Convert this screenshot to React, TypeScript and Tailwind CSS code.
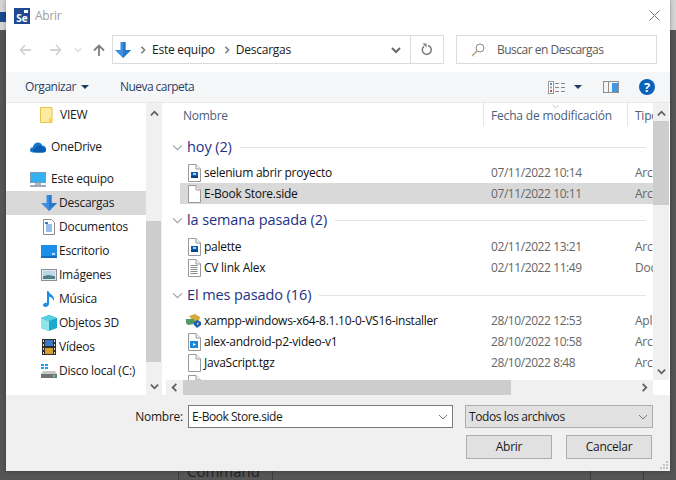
import React from "react";

const FileBase = ({ children }: { children?: React.ReactNode }) => (
  <svg width="16" height="18" viewBox="0 0 16 18" className="shrink-0">
    <path d="M2.5 .5h7.5l4.5 4.5v12.5h-12z" fill="#fff" stroke="#9a9a9a" />
    <path d="M10 .5v4.5h4.5" fill="#f4f4f4" stroke="#9a9a9a" />
    {children}
  </svg>
);

const ImgFile = () => (
  <FileBase>
    <rect x="5" y="8" width="7" height="6" fill="#0f5fb0" />
    <rect x="7" y="9" width="3" height="2" fill="#9fd0f5" />
    <rect x="5" y="12" width="7" height="2" fill="#0a3f80" />
  </FileBase>
);

const VideoFile = () => (
  <FileBase>
    <rect x="4" y="8" width="8" height="7" fill="#1a86d8" />
    <path d="M7 10l3 1.5-3 1.5z" fill="#fff" />
  </FileBase>
);

const TextFile = () => (
  <FileBase>
    <path d="M4.500 6.500h7M4.500 8.500h7M4.500 10.500h7M4.500 12.500h7M4.500 14.500h7" stroke="#8a8a8a" />
  </FileBase>
);

const Xampp = () => (
  <svg width="18" height="16" viewBox="0 0 18 16" className="shrink-0">
    <path d="M4 3l6-2 5 3-1 4-5 1z" fill="#d8a93c" />
    <path d="M1 6h8l1 5-7 1-2-2z" fill="#4f9a66" />
    <path d="M12 7l4 2v3l-4 3-3-3v-3z" fill="#1f5fb0" />
    <path d="M12 9l2 1.500-2 2z" fill="#f0c33c" />
  </svg>
);

const DownArrow = ({ w = 16 }: { w?: number }) => (
  <svg width={w} height={w} viewBox="0 0 16 16" className="shrink-0">
    <path d="M5.500 0h5v8H16l-8 8-8-8h5.500z" fill="#3a8fe0" />
    <path d="M8 0h2.500v8H16l-8 8z" fill="#2a78c8" />
  </svg>
);

const FolderY = () => (
  <svg width="13" height="16" viewBox="0 0 13 16" className="shrink-0">
    <path d="M.5 .5h11.500v15H.5z" fill="#fdeb9f" stroke="#e6c24e" />
    <path d="M9 11h3.500v4.500H9z" fill="#f6d463" />
  </svg>
);

const OneDrive = () => (
  <svg width="16" height="11" viewBox="0 0 16 11" className="shrink-0">
    <path d="M3 10.500C1 10.500 0 9.300 0 8c0-1.500 1.200-2.600 2.800-2.700C3.500 2.200 5.500 .5 8 .5c2 0 3.500 1 4.300 3 2 0 3.700 1.500 3.700 3.500s-1.500 3.500-3.500 3.500z" fill="#1278d0" />
    <path d="M6 10.500c-2 0-3-1-3-2.300 0-1.400 1-2.300 2.500-2.400.8-1.500 2-2.300 3.700-2.300 1.500 0 2.700.7 3.300 2 1.900 0 3.500 1.300 3.500 3 0 1-1 2-2.500 2z" fill="#0a5cb0" />
  </svg>
);

const Monitor = () => (
  <svg width="16" height="15" viewBox="0 0 16 15" className="shrink-0">
    <rect x=".5" y=".5" width="15" height="10" fill="#35b0ee" stroke="#7d9cb8" />
    <rect x="5" y="11" width="6" height="2" fill="#a8b8c8" />
    <rect x="0" y="13" width="16" height="2" fill="#9aaabb" />
  </svg>
);

const Docs = () => (
  <svg width="12" height="16" viewBox="0 0 12 16" className="shrink-0">
    <path d="M.5 .5h8l3 3v12H.5z" fill="#fff" stroke="#8c8c8c" />
    <path d="M3 6h6M3 8h6M3 10h6M3 12h6" stroke="#2b7fd0" />
    <rect x="2" y="3" width="3" height="2" fill="#2b7fd0" />
  </svg>
);

const Desktop = () => (
  <svg width="16" height="13" viewBox="0 0 16 13" className="shrink-0">
    <rect width="16" height="13" fill="#1b8fe8" />
    <rect y="11" width="16" height="2" fill="#0f6cc0" />
    <rect x="11" y="8" width="3" height="2" fill="#bfe2fb" />
  </svg>
);

const Pictures = () => (
  <svg width="16" height="12" viewBox="0 0 16 12" className="shrink-0">
    <rect x=".5" y=".5" width="15" height="11" fill="#dfeaf0" stroke="#8f8f8f" />
    <rect x="2" y="2" width="12" height="4" fill="#bcd6e6" />
    <path d="M2 7l5-1 7 1v3H2z" fill="#4f7f86" />
  </svg>
);

const Music = () => (
  <svg width="12" height="16" viewBox="0 0 12 16" className="shrink-0">
    <path d="M4 0h1.500c.5 3 5.500 4 5.500 8 0 1-.3 1.500-.8 2 .2-2.500-2-3.800-4.200-4.500V13c0 2-2 3-3.700 3C1 16 0 15.200 0 14c0-1.500 1.700-2.600 4-2.300z" fill="#1b8fe8" />
  </svg>
);

const Cube = () => (
  <svg width="16" height="16" viewBox="0 0 16 16" className="shrink-0">
    <path d="M8 0l8 3v10l-8 3-8-3V3z" fill="#1aa8cc" />
    <path d="M0 3l8 3v10l-8-3z" fill="#8fe6ea" />
    <path d="M0 3l8-3 8 3-8 3z" fill="#55cfe0" />
  </svg>
);

const Film = () => (
  <svg width="14" height="16" viewBox="0 0 14 16" className="shrink-0">
    <rect width="14" height="16" fill="#2e2e2e" />
    <rect x="3" y="1" width="8" height="6" fill="#3a78c8" />
    <rect x="3" y="9" width="8" height="6" fill="#d8a030" />
    <path d="M1 1h1v2H1zM1 5h1v2H1zM1 9h1v2H1zM1 13h1v2H1zM12 1h1v2h-1zM12 5h1v2h-1zM12 9h1v2h-1zM12 13h1v2h-1z" fill="#ddd" />
  </svg>
);

const Drive = () => (
  <svg width="16" height="14" viewBox="0 0 16 14" className="shrink-0">
    <rect x="0" y="0" width="3" height="2" fill="#1fa0ee" />
    <rect x="4" y="0" width="3" height="2" fill="#1fa0ee" />
    <rect x="0" y="3" width="3" height="2" fill="#1fa0ee" />
    <rect x="4" y="3" width="3" height="2" fill="#1fa0ee" />
    <path d="M2 7h12l2 3v4H0v-4z" fill="#c6c6c6" />
    <rect y="10" width="16" height="4" fill="#6f7476" />
    <rect x="12" y="11" width="2" height="2" fill="#55e060" />
  </svg>
);

const Chevron = ({ dir, color = "#606060", size = 10, sw = 2 }: { dir: "up" | "down" | "left" | "right"; color?: string; size?: number; sw?: number }) => {
  const d = {
    up: "M1 7l4-4 4 4",
    down: "M1 3l4 4 4-4",
    left: "M7 1L3 5l4 4",
    right: "M3 1l4 4-4 4",
  }[dir];
  return (
    <svg width={size} height={size} viewBox="0 0 10 10" className="shrink-0">
      <path d={d} fill="none" stroke={color} strokeWidth={sw} />
    </svg>
  );
};

const Caret = () => (
  <svg width="8" height="4" viewBox="0 0 8 4" className="shrink-0">
    <path d="M0 0h8L4 4z" fill="#1e3a5f" />
  </svg>
);

const NavArrow = ({ dir, color }: { dir: "left" | "right" | "up"; color: string }) => {
  const d = {
    left: "M6 1L1.500 6 6 11M2 6h10",
    right: "M7 1l4.500 5L7 11M1 6h10",
    up: "M1 6.500L6 1.500l5 5M6 2v10",
  }[dir];
  return (
    <svg width="12" height="12" viewBox="0 0 12 12" className="shrink-0">
      <path d={d} fill="none" stroke={color} strokeWidth="1.800" />
    </svg>
  );
};

const navItems = [
  { label: "Documentos", icon: <Docs /> },
  { label: "Escritorio", icon: <Desktop /> },
  { label: "Imágenes", icon: <Pictures /> },
  { label: "Música", icon: <Music /> },
  { label: "Objetos 3D", icon: <Cube /> },
  { label: "Vídeos", icon: <Film /> },
  { label: "Disco local (C:)", icon: <Drive /> },
];

const NavRow = ({ icon, label, selected }: { icon: React.ReactNode; label: string; selected?: boolean }) => (
  <div className={`h-6 flex items-center ${selected ? "bg-[#d9d9d9]" : ""}`}>
    <div className="w-[53px] pl-8 flex justify-center shrink-0">
      <div className="w-4 flex justify-center">{icon}</div>
    </div>
    <span className="whitespace-nowrap">{label}</span>
  </div>
);

const GroupHeader = ({ label, mt }: { label: string; mt: string }) => (
  <div className={`h-[22px] flex items-center ${mt}`}>
    <div className="w-[21px] pl-[6px] shrink-0">
      <Chevron dir="down" color="#a0a0a0" size={11} sw={1} />
    </div>
    <span className="text-[14.5px] tracking-[-0.1px] text-[#1e3287] whitespace-nowrap">{label}</span>
    <div className="flex-1 h-px bg-[#e3e3e3] ml-2 mr-[7px]" />
  </div>
);

const FileRow = ({ icon, name, date, type, selected }: { icon: React.ReactNode; name: string; date: string; type: string; selected?: boolean }) => (
  <div className={`h-[21px] flex items-center ml-[14px] ${selected ? "bg-[#d9d9d9]" : ""}`}>
    <div className="w-[24px] shrink-0 flex justify-center pl-1">{icon}</div>
    <span className="w-[287px] shrink-0 text-[#111] whitespace-nowrap">{name}</span>
    <span className="w-[144px] shrink-0 text-[#666] whitespace-nowrap tracking-[-0.42px]">{date}</span>
    <span className="text-[#666] whitespace-nowrap">{type}</span>
  </div>
);

export default function App() {
  return (
    <div className="relative w-[676px] h-[480px] overflow-hidden bg-[#555555] text-[12px] text-[#1a1a1a] font-['Open_Sans',sans-serif] tracking-[-0.25px]">
      {/* window behind the dialog */}
      <div className="absolute left-0 top-0 w-[6px] h-[30px] bg-[#d4d4d4]" />
      <div className="absolute left-0 top-[12px] w-[6px] h-[10px] bg-[#1a4a8c]" />
      <div className="absolute right-0 top-0 w-[6px] h-[30px] bg-[#d4d4d4]" />
      <div className="absolute left-[178px] top-[470px] w-px h-[10px] bg-[#3c3c3c]" />
      <div className="absolute left-[272px] top-[470px] w-px h-[10px] bg-[#3c3c3c]" />
      <div className="absolute left-[590px] top-[470px] w-px h-[10px] bg-[#3c3c3c]" />
      <div className="absolute left-[643px] top-[470px] w-px h-[10px] bg-[#3c3c3c]" />
      <span className="absolute left-[187px] top-[460px] text-[15px] text-[#222] tracking-normal">Command</span>

      <div className="absolute left-[6px] top-0 w-[664px] h-[471px] bg-white flex flex-col shadow-[0_0_4px_rgba(0,0,0,0.35)]">
        {/* title bar */}
        <div className="h-[31px] flex items-center pl-2 pr-[10px] shrink-0">
          <div className="relative w-4 h-4 bg-[#1f4a8f] text-white text-[10px] font-bold leading-[21px] text-center tracking-normal">
            Se
            <div className="absolute right-[2px] top-[2px] w-1 h-[3px] bg-white" />
          </div>
          <span className="ml-[5px] text-[#a0a0a0]">Abrir</span>
          <svg width="11" height="11" viewBox="0 0 11 11" className="ml-auto">
            <path d="M.5 .5l10 10M10.500 .5l-10 10" stroke="#777" strokeWidth="1" />
          </svg>
        </div>

        {/* navigation */}
        <div className="h-[41px] flex items-start shrink-0">
          <div className="w-[106px] h-[29px] mt-1 flex items-center shrink-0">
            <div className="ml-[13px]"><NavArrow dir="left" color="#d4d4d4" /></div>
            <div className="ml-[18px]"><NavArrow dir="right" color="#d4d4d4" /></div>
            <div className="ml-[13px]"><Chevron dir="down" color="#d4d4d4" size={8} sw={1.400} /></div>
            <div className="ml-[11px]"><NavArrow dir="up" color="#7f7f7f" /></div>
          </div>
          <div className="w-[332px] h-[29px] mt-1 border border-[#dcdcdc] flex items-center shrink-0">
            <div className="ml-[2px]"><DownArrow /></div>
            <div className="ml-2"><Chevron dir="right" color="#7d7d7d" size={8} /></div>
            <span className="ml-[5px]">Este equipo</span>
            <div className="ml-2"><Chevron dir="right" color="#7d7d7d" size={8} /></div>
            <span className="ml-[5px]">Descargas</span>
            <div className="ml-auto mr-[9px]"><Chevron dir="down" color="#6a6a6a" size={10} /></div>
            <div className="w-[33px] h-full border-l border-[#dcdcdc] flex items-center justify-center">
              <svg width="12" height="13" viewBox="0 0 12 13">
                <path d="M7 2.500a4.500 4.500 0 1 1-4 .8" fill="none" stroke="#7a7a7a" strokeWidth="1.500" />
                <path d="M1.500 .5h4v4z" fill="#7a7a7a" />
              </svg>
            </div>
          </div>
          <div className="w-[201px] h-[29px] mt-1 ml-3 border border-[#dcdcdc] flex items-center shrink-0">
            <svg width="14" height="14" viewBox="0 0 14 14" className="ml-[14px]">
              <circle cx="9" cy="5" r="4" fill="none" stroke="#8a8a8a" />
              <path d="M6 8l-5 5" stroke="#b09a70" strokeWidth="1.200" />
            </svg>
            <span className="ml-3 text-[#5a5a5a] tracking-[-0.5px]">Buscar en Descargas</span>
          </div>
        </div>

        {/* toolbar */}
        <div className="h-[31px] bg-[#f5f6f7] border-b border-[#e8e8e8] flex items-center shrink-0">
          <span className="ml-[19px] text-[#2b3f66] tracking-[-0.45px]">Organizar</span>
          <div className="ml-[5px]"><Caret /></div>
          <span className="ml-[31px] text-[#2b3f66] tracking-[-0.55px]">Nueva carpeta</span>
          <svg width="17" height="13" viewBox="0 0 17 13" className="ml-auto">
            <rect x=".5" y=".5" width="5" height="12" fill="#fff" stroke="#9a9a9a" />
            <rect x="2" y="2" width="2" height="2" fill="#4a90d0" />
            <rect x="2" y="5.500" width="2" height="2" fill="#999" />
            <rect x="2" y="9" width="2" height="2" fill="#d04a4a" />
            <path d="M7 2.500h4M13 2.500h4M7 6.500h4M13 6.500h4M7 10.500h4M13 10.500h4" stroke="#8a8a8a" />
          </svg>
          <div className="ml-[9px]"><Caret /></div>
          <svg width="16" height="12" viewBox="0 0 16 12" className="ml-[21px]">
            <rect x=".5" y=".5" width="15" height="11" fill="#f4f4f4" stroke="#8f8f8f" />
            <rect x="5" y="1" width="1" height="10" fill="#8f8f8f" />
            <rect x="9" y="2" width="6" height="9" fill="#3f97e0" />
          </svg>
          <div className="ml-5 mr-[15px] w-4 h-4 rounded-full bg-[#0a63b8] text-white text-[13px] font-bold leading-4 text-center tracking-normal">?</div>
        </div>

        {/* body */}
        <div className="h-[292px] flex shrink-0 bg-white">
          {/* nav pane */}
          <div className="w-[140px] shrink-0">
            <div className="h-6 flex items-center pl-[34px] pb-[1px]">
              <FolderY />
              <span className="ml-[7px]">VIEW</span>
            </div>
            <div className="h-6 flex items-center pl-6 mt-2">
              <OneDrive />
              <span className="ml-[5px]">OneDrive</span>
            </div>
            <div className="h-6 flex items-center pl-6 mt-2">
              <Monitor />
              <span className="ml-[5px]">Este equipo</span>
            </div>
            <NavRow icon={<DownArrow />} label="Descargas" selected />
            {navItems.map((n) => (
              <NavRow key={n.label} icon={n.icon} label={n.label} />
            ))}
          </div>

          {/* nav scrollbar */}
          <div className="w-4 shrink-0 bg-[#f0f0f0] flex flex-col">
            <div className="h-[17px] flex items-center justify-center pt-1"><Chevron dir="up" size={9} /></div>
            <div className="flex-1 pt-[101px] pb-[16px]">
              <div className="w-[15px] h-full bg-[#cdcdcd]" />
            </div>
            <div className="h-[17px] flex items-center justify-center"><Chevron dir="down" size={9} /></div>
          </div>

          <div className="w-1 shrink-0" />

          {/* file list */}
          <div className="flex-1 min-w-0 flex flex-col">
            <div className="flex-1 min-h-0 flex">
              <div className="w-[487px] shrink-0 overflow-hidden">
                <div className="h-[23px] flex text-[#4c607a]">
                  <div className="w-[318px] border-r border-[#e5e5e5] pl-[17px] pt-[2px] flex items-center shrink-0">Nombre</div>
                  <div className="relative w-[144px] border-r border-[#e5e5e5] pl-[7px] pt-[2px] flex items-center shrink-0 tracking-[-0.17px] whitespace-nowrap">
                    Fecha de modificación
                    <div className="absolute left-[68px] top-0"><Chevron dir="down" color="#a0a0a0" size={7} sw={1} /></div>
                  </div>
                  <div className="pl-[7px] pt-[2px] flex items-center whitespace-nowrap">Tipo</div>
                </div>
                <GroupHeader label="hoy (2)" mt="mt-[10px]" />
                <div className="mt-[4px]">
                  <FileRow icon={<ImgFile />} name="selenium abrir proyecto" date="07/11/2022 10:14" type="Arc" />
                  <FileRow icon={<FileBase />} name="E-Book Store.side" date="07/11/2022 10:11" type="Arc" selected />
                </div>
                <GroupHeader label="la semana pasada (2)" mt="mt-[5px]" />
                <div className="mt-[5px]">
                  <FileRow icon={<ImgFile />} name="palette" date="02/11/2022 13:21" type="Arc" />
                  <FileRow icon={<TextFile />} name="CV link Alex" date="02/11/2022 11:49" type="Doc" />
                </div>
                <GroupHeader label="El mes pasado (16)" mt="mt-[6px]" />
                <div className="mt-[4px]">
                  <FileRow icon={<Xampp />} name="xampp-windows-x64-8.1.10-0-VS16-installer" date="28/10/2022 12:53" type="Apl" />
                  <FileRow icon={<VideoFile />} name="alex-android-p2-video-v1" date="28/10/2022 10:58" type="Arc" />
                  <FileRow icon={<FileBase />} name="JavaScript.tgz" date="28/10/2022 8:48" type="Arc" />
                  <FileRow icon={<FileBase />} name="" date="" type="" />
                </div>
              </div>
              <div className="w-4 shrink-0 bg-[#f0f0f0] flex flex-col">
                <div className="h-[17px] flex items-center justify-center pt-1"><Chevron dir="up" size={9} /></div>
                <div className="flex-1 pt-[1px] pb-[158px]">
                  <div className="w-full h-full bg-[#cdcdcd]" />
                </div>
                <div className="h-[17px] flex items-center justify-center"><Chevron dir="down" size={9} /></div>
              </div>
            </div>
            {/* h scrollbar */}
            <div className="h-[15px] flex shrink-0">
              <div className="w-[487px] bg-[#f0f0f0] flex items-center">
                <div className="w-[17px] flex justify-center"><Chevron dir="left" size={9} /></div>
                <div className="w-[328px] h-full bg-[#cdcdcd]" />
                <div className="ml-auto w-[17px] flex justify-center"><Chevron dir="right" size={9} /></div>
              </div>
            </div>
          </div>
        </div>

        {/* footer */}
        <div className="flex-1 bg-[#f0f0f0] relative flex flex-col items-end pr-[17px] pt-[10px]">
          <div className="flex items-center h-[23px]">
            <span className="mr-[5px]">Nombre:</span>
            <div className="w-[265px] h-full bg-white border border-[#7a7a7a] flex items-center pl-[3px] tracking-[-0.45px]">
              E-Book Store.side
              <div className="ml-auto mr-[4px]"><Chevron dir="down" color="#7a7a7a" size={10} sw={1} /></div>
            </div>
            <div className="w-[188px] h-full ml-3 bg-[#e1e1e1] border border-[#adadad] flex items-center pl-[3px] tracking-[-0.4px]">
              Todos los archivos
              <div className="ml-auto mr-[4px]"><Chevron dir="down" color="#7a7a7a" size={10} sw={1} /></div>
            </div>
          </div>
          <div className="flex mt-[7px] gap-[14px] mr-px">
            <div className="w-[86px] h-6 bg-[#e1e1e1] border border-[#adadad] flex items-center justify-center">Abrir</div>
            <div className="w-[86px] h-6 bg-[#e1e1e1] border border-[#adadad] flex items-center justify-center">Cancelar</div>
          </div>
          <svg width="8" height="8" viewBox="0 0 8 8" className="absolute right-[2px] bottom-[2px]">
            <path d="M6 0h2v2H6zM3 3h2v2H3zM6 3h2v2H6zM0 6h2v2H0zM3 6h2v2H3zM6 6h2v2H6z" fill="#c4c4c4" />
          </svg>
        </div>
      </div>
    </div>
  );
}
